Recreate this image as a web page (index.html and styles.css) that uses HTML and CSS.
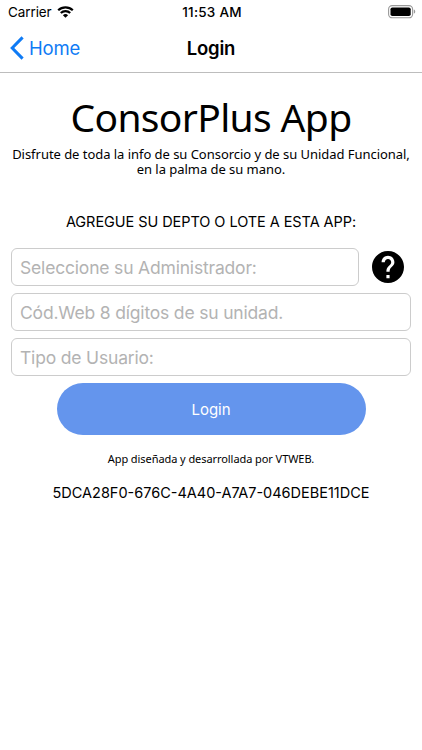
FILE: index.html
```html
<!DOCTYPE html>
<html lang="es">
  <head>
    <meta charset="UTF-8" />
    <meta name="viewport" content="width=device-width, initial-scale=1.0" />
    <title>Login</title>
    <link rel="stylesheet" href="styles.css">
  </head>
  <body>
    <div class="status-bar">
      <div class="carrier">
        <span>Carrier</span>
        <svg class="wifi" viewBox="0 0 17 12" aria-hidden="true">
          <path d="M1.2 4.3a10.4 10.4 0 0 1 14.6 0M3.8 7a6.7 6.7 0 0 1 9.4 0" />
          <path class="dot" d="M8.5 11.8 5.9 9.2a3.7 3.7 0 0 1 5.2 0z" />
        </svg>
      </div>
      <span class="time">11:53 AM</span>
      <svg class="battery" viewBox="0 0 28 14" aria-hidden="true">
        <rect class="case" x="0.6" y="0.6" width="24" height="12.2" rx="3.6" />
        <rect x="2.5" y="2.4" width="20.2" height="8.6" rx="1.8" />
        <path class="cap" d="M25.8 4.6c1.9.6 1.9 3.6 0 4.2z" />
      </svg>
    </div>

    <header class="nav-bar">
      <a class="back" href="#">
        <svg viewBox="0 0 14 24" aria-hidden="true">
          <path d="M12.6 1.4 2.2 12l10.4 10.6" />
        </svg>
        <span>Home</span>
      </a>
      <h1>Login</h1>
    </header>

    <main>
      <h2 class="app-name">ConsorPlus App</h2>
      <p class="tagline">Disfrute de toda la info de su Consorcio y de su Unidad Funcional, en la palma de su mano.</p>
      <p class="instructions">AGREGUE SU DEPTO O LOTE A ESTA APP:</p>

      <form class="login-form">
        <div class="row">
          <input class="admin" type="text" placeholder="Seleccione su Administrador:" />
          <button class="help" type="button" aria-label="Ayuda">
            <svg viewBox="2 2 20 20" aria-hidden="true">
              <path d="M12 2C6.48 2 2 6.48 2 12s4.48 10 10 10 10-4.48 10-10S17.52 2 12 2zm1 17h-2v-2h2v2zm2.07-7.75l-.9.92C13.45 12.9 13 13.5 13 15h-2v-.5c0-1.1.45-2.1 1.17-2.83l1.24-1.26c.37-.36.59-.86.59-1.41 0-1.1-.9-2-2-2s-2 .9-2 2H8c0-2.21 1.79-4 4-4s4 1.79 4 4c0 .88-.36 1.68-.93 2.25z" />
            </svg>
          </button>
        </div>
        <input class="code" type="text" placeholder="Cód.Web 8 dígitos de su unidad." />
        <input class="user-type" type="text" placeholder="Tipo de Usuario:" />
        <button class="submit" type="button">Login</button>
      </form>

      <p class="credits">App diseñada y desarrollada por VTWEB.</p>
      <p class="device-id">5DCA28F0-676C-4A40-A7A7-046DEBE11DCE</p>
    </main>
  </body>
</html>
```
FILE: styles.css
```css
:root {
  --ui-font: Inter, "Liberation Sans", sans-serif;
  --brand-font: "Noto Sans", "Open Sans", sans-serif;
  --tint: #0f7bf5;
  --field-border: #ccc;
}

* {
  box-sizing: border-box;
}

body {
  margin: 0;
  min-height: 100vh;
  background: #fff;
  color: #000;
  font-family: var(--ui-font);
}

h1,
h2,
p {
  margin: 0;
}

/* Status bar */
.status-bar {
  display: grid;
  grid-template-columns: 1fr auto 1fr;
  align-items: center;
  height: 24px;
  padding: 0 6px 0 8px;
  font-size: 13.5px;
}

.carrier {
  display: flex;
  align-items: center;
  gap: 5px;
  letter-spacing: -0.1px;
}

.wifi {
  width: 17px;
  height: 12px;
  fill: none;
  stroke: #000;
  stroke-width: 2.2;
}

.wifi .dot {
  fill: #000;
  stroke: none;
}

.time {
  font-weight: 500;
  letter-spacing: 0.25px;
}

.battery {
  justify-self: end;
  width: 28px;
  height: 14px;
}

.battery .case {
  fill: none;
  stroke: #999;
  stroke-width: 1.1;
}

.battery .cap {
  fill: #999;
}

/* Navigation bar */
.nav-bar {
  display: grid;
  grid-template-columns: 1fr auto 1fr;
  align-items: center;
  height: 49px;
  padding: 0 10px;
  border-bottom: 1px solid #bdbdbd;
}

.nav-bar h1 {
  font-size: 18.5px;
  font-weight: 600;
  letter-spacing: -0.2px;
}

.back {
  display: flex;
  align-items: center;
  gap: 5px;
  color: var(--tint);
  font-size: 18.5px;
  letter-spacing: -0.2px;
  text-decoration: none;
}

.back svg {
  width: 14px;
  height: 24px;
  fill: none;
  stroke: currentColor;
  stroke-width: 3;
}

/* Content */
main {
  display: flex;
  flex-direction: column;
  padding: 18px 11px 0;
  text-align: center;
}

.app-name {
  font: 400 39px/52px var(--brand-font);
  letter-spacing: -0.65px;
}

.tagline {
  margin-top: 4px;
  font: 13px/15px var(--brand-font);
  letter-spacing: -0.04px;
}

.instructions {
  margin-top: 35px;
  font-size: 14.5px;
  letter-spacing: -0.06px;
  line-height: 20px;
}

.login-form {
  display: flex;
  flex-direction: column;
  gap: 7px;
  margin-top: 16px;
}

.row {
  display: flex;
  align-items: center;
  gap: 13px;
}

.login-form input {
  width: 100%;
  height: 38px;
  padding: 0 8px;
  border: 1.5px solid var(--field-border);
  border-radius: 6px;
  background: #fff;
  font: 17.5px var(--ui-font);
  letter-spacing: -0.18px;
}

.login-form input::placeholder {
  color: #b3b3b3;
  opacity: 1;
}

.row input {
  flex: 1;
}

.help {
  flex: none;
  width: 32px;
  height: 32px;
  margin-right: 7px;
  padding: 0;
  border: 0;
  background: none;
}

.help svg {
  display: block;
  width: 32px;
  height: 32px;
}

.submit {
  align-self: center;
  width: 309px;
  height: 52px;
  border: 0;
  border-radius: 26px;
  background: cornflowerblue;
  color: #fff;
  font: 15px var(--ui-font);
}

.credits {
  margin-top: 16px;
  font: 11px/16px var(--brand-font);
  letter-spacing: -0.07px;
}

.device-id {
  margin-top: 16px;
  font-size: 14.5px;
  line-height: 20px;
}
```
